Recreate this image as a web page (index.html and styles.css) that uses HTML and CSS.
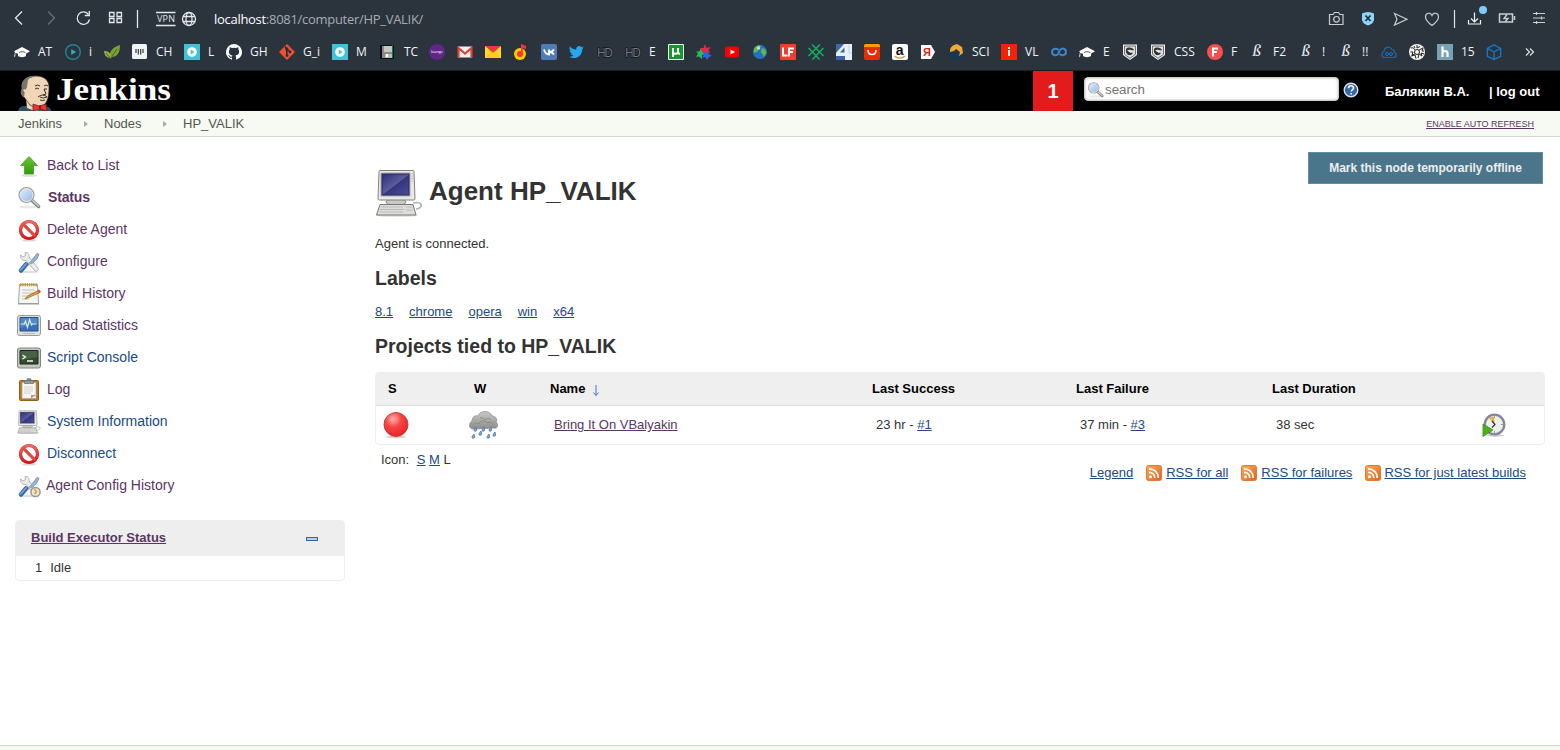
FILE: index.html
```html
<!DOCTYPE html>
<html lang="en">
<head>
<meta charset="utf-8">
<title>HP_VALIK [Jenkins]</title>
<link rel="stylesheet" href="styles.css">
</head>
<body>
<svg class="defs" aria-hidden="true">
  <defs>
    <linearGradient id="gGreen" x1="0" y1="0" x2="0" y2="1"><stop offset="0" stop-color="#6cc63a"/><stop offset="1" stop-color="#2f9a0c"/></linearGradient>
    <linearGradient id="gScreen" x1="0" y1="0" x2="1" y2="1"><stop offset="0" stop-color="#2f2f78"/><stop offset=".5" stop-color="#5b5d9c"/><stop offset=".52" stop-color="#34357c"/><stop offset="1" stop-color="#4b4c94"/></linearGradient>
    <linearGradient id="gRss" x1="0" y1="0" x2="1" y2="1"><stop offset="0" stop-color="#f8b05c"/><stop offset="1" stop-color="#e2601a"/></linearGradient>
    <linearGradient id="gCloud" x1="0" y1="0" x2="0" y2="1"><stop offset="0" stop-color="#c9cac6"/><stop offset="1" stop-color="#8b8d89"/></linearGradient>
    <radialGradient id="gBall" cx=".38" cy=".28" r=".75"><stop offset="0" stop-color="#ffb3b0"/><stop offset=".45" stop-color="#f84444"/><stop offset="1" stop-color="#e82424"/></radialGradient>
    <linearGradient id="gLens" x1="0" y1="0" x2="1" y2="1"><stop offset="0" stop-color="#e4f0fc"/><stop offset="1" stop-color="#8db7e6"/></linearGradient>
    <linearGradient id="gNo" x1="0" y1="0" x2="0" y2="1"><stop offset="0" stop-color="#ef6a66"/><stop offset="1" stop-color="#d81616"/></linearGradient>
  </defs>
  <symbol id="hat" viewBox="0 0 16 16"><path d="M8 3 0 7.300l1 .7-1 5.500 1.300-1.500V9L4 9.800v2.200c2 1.500 6 1.500 8 0V9.800l4-2.500z" fill="#fff"/><path d="M5 8.700c1-1.300 5-1.300 6.500 0" fill="none" stroke="#2b343d" stroke-width=".8"/></symbol>
  <symbol id="playbox" viewBox="0 0 16 16"><path fill="#42c2d8" d="M0 0h16v16H0z"/><circle cx="8" cy="8" r="4.800" fill="#fff"/><path d="m6.700 5.500 3.800 2.500-3.800 2.500z" fill="#42c2d8"/></symbol>
  <symbol id="shield" viewBox="0 0 16 16"><path d="M1 .5h14v10.500L8 16l-7-5z" fill="#eee"/><path d="M2.500 2h11v8.300L8 14.300l-5.500-4z" fill="#ddd" stroke="#555" stroke-width=".8"/><path d="M4 5c2-2.500 7-1.500 8 1l-2 1-2-1.500-3 1 3 1.500 3 1-2 2H6L4 8.500z" fill="#333"/><path d="M6 7l5-1-2 3z" fill="#eee"/></symbol>
  <symbol id="lens" viewBox="0 0 24 24"><ellipse cx="11" cy="21" rx="9" ry="1.500" fill="#e9e9e9"/><path d="m15 14.500 6.500 6" stroke="#858585" stroke-width="3.600" stroke-linecap="round"/><path d="m15.500 14.500 6 5.500" stroke="#d0d0d0" stroke-width="1.500" stroke-linecap="round"/><circle cx="9.500" cy="9" r="7.200" fill="url(#gLens)" stroke="#9c9e9a" stroke-width="1.800"/><circle cx="9.500" cy="9" r="6.500" fill="none" stroke="#f1f1f1"/></symbol>
  <symbol id="no" viewBox="0 0 24 24"><ellipse cx="12" cy="22.300" rx="7" ry="1.200" fill="#d8d8d8"/><circle cx="12" cy="12" r="8.500" fill="#fff" stroke="#c42525" stroke-width="3.200"/><path d="m6 6 12 12" stroke="#c42525" stroke-width="3"/><circle cx="12" cy="12" r="8.500" fill="none" stroke="url(#gNo)" stroke-width="2.500"/><path d="m6 6 12 12" stroke="#e84744" stroke-width="2.300"/></symbol>
  <symbol id="tools" viewBox="0 0 24 24"><ellipse cx="12" cy="22" rx="10" ry="1.200" fill="#e0e0e0"/><path d="M3.500 5 6 7l2.500-1.500L8 2.500c3-.5 4.500 2 4 4.500l9 11c1 2-1 4-3 3L9 10.500c-3 1-6-2-5.500-5.500z" fill="#eceeeb" stroke="#a2a4a0" stroke-width=".8"/><path d="m20.500 3 1.500 1.500-2.500 5-5 4.500-1.500-1.500 3-4z" fill="#8fb3da" stroke="#7891ad" stroke-width=".8"/><path d="m13.500 12.500-3 3" stroke="#aaa" stroke-width="2"/><path d="m4 20.500 5-6" stroke="#3b6cab" stroke-width="4.600" stroke-linecap="round"/><path d="m3.500 20 5.500-6" stroke="#78a4d8" stroke-width="1.800" stroke-linecap="round"/></symbol>
  <symbol id="computer" viewBox="0 0 48 48"><ellipse cx="22" cy="46.500" rx="21" ry="1.300" fill="#dedede"/><path d="M38 34c10-2 11 5 3 6" fill="none" stroke="#b4b5b2" stroke-width="1.600"/><ellipse cx="21" cy="33" rx="10" ry="3.500" fill="#c9cac7" stroke="#888"/><path d="M5 1.500h33q1 0 1 1l1 27q0 1.500-1.500 1.500H4.500Q3 31 3 29.500L4 2.500q0-1 1-1z" fill="#e9eae7" stroke="#80817e"/><path d="M6 4h29v23H6z" fill="#292c66" stroke="#aaa"/><path d="M7.500 5.500h26v20h-26z" fill="url(#gScreen)"/><path d="M37 4v10" stroke="#999" stroke-dasharray="1 1.500"/><path d="M5 35.500h33l3 10.500H1.500z" fill="#dcddda" stroke="#777873"/><path d="M6 38h22M5 40.500h24M5 43h23M31 38h6M31 41h6" stroke="#bbbdb9"/></symbol>
  <symbol id="rss" viewBox="0 0 16 16"><rect x=".5" y=".5" width="15" height="15" rx="2" fill="url(#gRss)" stroke="#e07a34"/><circle cx="4.500" cy="11.800" r="1.500" fill="#fff"/><path d="M3 7.300c3.500 0 5.800 2.300 5.800 5.800M3 3.800c5.500 0 9.300 3.800 9.300 9.300" fill="none" stroke="#fff" stroke-width="1.700"/></symbol>
</svg>

<div class="browser">
  <div class="toolbar">
    <svg class="nav-icons" viewBox="0 0 210 36" fill="none" stroke="#e3e8eb" stroke-width="1.300">
      <path d="m22 11.500-6.500 6.500 6.500 6.500"/><path d="m48 11.500 6.500 6.500-6.500 6.500" stroke="#65717b"/>
      <path d="M88.500 14.500a6.200 6.200 0 1 0 1 5"/><path d="M89.300 11v4.500h-4.500"/>
      <path d="M109.500 12.500h4.500v4h-4.500zM117 12.500h4.500v4H117zM109.500 18.500h4.500v4h-4.500zM117 18.500h4.500v4H117z"/>
      <path d="M137.500 10v18"/><path d="M156 12.500h19.500M156 25.500h19.500"/>
      <text class="vpn" x="157" y="22.300" textLength="18">VPN</text>
      <circle cx="189" cy="19" r="6.500"/><ellipse cx="189" cy="19" rx="3" ry="6.500"/><path d="M183 16.500h12M183 21.500h12"/>
    </svg>
    <div class="url"><b>localhost</b>:8081/computer/HP_VALIK/</div>
    <svg class="tool-icons" viewBox="0 0 240 36" fill="none" stroke="#c8ced2" stroke-width="1.200">
      <path d="M9.500 14.500H13l1.500-2h4l1.500 2h3v10H9.500z"/><circle cx="16.500" cy="19.300" r="2.800"/>
      <path d="M42 13.500q6-3 12 0v6.500q-1 4-6 5.500-5-1.500-6-5.500z" fill="#8ed5fb" stroke="none"/><path d="m45.500 15.500 5 5.500m0-5.500-5 5.500" stroke="#203040" stroke-width="1.800"/>
      <path d="m74.500 13.500 12.500 5.700L74.500 25l2.500-5.800z"/>
      <path d="M112 25.500c-4-3-6.500-5.500-6.500-8.500 0-4.500 5-5 6.500-1.500 1.500-3.500 6.500-3 6.500 1.500 0 3-2.500 5.500-6.500 8.500z"/>
      <path d="M134.500 10v18" stroke="#dde2e5"/><path d="M154.500 12.500v9m-3.500-3 3.500 3.500 3.500-3.500M148.500 20v4h12v-4" stroke="#eef2f4"/><circle cx="163" cy="10" r="4" fill="#80ccfb" stroke="none"/>
      <path d="M179.500 14h13v8h-13zM194.500 16v4" stroke-width="1.500"/><path d="m187 14.500-3 4h4l-3 3.500" stroke-width="1.400"/>
      <path d="M213 13.500h12M213 18h12M213 22.500h12M216.500 12v3M221.500 16.500v3M216.500 21v3"/>
    </svg>
  </div>
  <div class="bookmarks">
    <span class="bm"><svg><use href="#hat"/></svg><i class="w15">AT</i></span>
    <span class="bm"><svg viewBox="0 0 16 16"><circle cx="8" cy="8" r="7.300" fill="none" stroke="#1f8799" stroke-width="1.400"/><path d="m6.200 5 5 3-5 3z" fill="#35a9bc"/></svg><i class="w3">i</i></span>
    <span class="bm"><svg viewBox="0 0 16 16"><path d="M6.500 15C4 9 8 3 16 1c0 8-3 12-8 12z" fill="#7a9e34"/><path d="M0 7c5 0 7 2 6.500 7C2 14 .5 11 0 7z" fill="#8fb340"/><path d="m7 14 6-9M2 9l4 5" stroke="#476821"/></svg></span>
    <span class="bm"><svg viewBox="0 0 16 16"><rect y="0" width="15" height="15" rx="1.500" fill="#f2f3f4"/><path d="M4 5v4M6.300 5v5.500M8.700 5v5.500M11 5v4" stroke="#252d35" stroke-width="1.100"/></svg><i class="w16">CH</i></span>
    <span class="bm"><svg><use href="#playbox"/></svg><i class="w6">L</i></span>
    <span class="bm"><svg viewBox="0 0 16 16"><path fill="#fff" d="M8 0a8 8 0 0 0-2.530 15.590c.4.070.55-.17.550-.38v-1.490C3.800 14.210 3.330 12.650 3.330 12.650c-.36-.93-.89-1.170-.89-1.170-.72-.5.060-.48.060-.48.800.060 1.220.820 1.220.82.720 1.220 1.870.87 2.330.66.070-.52.280-.87.510-1.070-1.780-.2-3.640-.89-3.640-3.950 0-.87.310-1.590.820-2.150-.08-.2-.36-1.020.080-2.120 0 0 .67-.21 2.200.82a7.700 7.700 0 0 1 4 0c1.530-1.030 2.200-.82 2.200-.82.440 1.100.160 1.920.080 2.120.510.560.820 1.280.820 2.150 0 3.070-1.870 3.750-3.650 3.950.290.250.540.730.540 1.480v2.320c0 .21.150.46.550.38A8 8 0 0 0 8 0"/></svg><i class="w17">GH</i></span>
    <span class="bm"><svg viewBox="0 0 16 16"><path d="m8 0 8 8-8 8-8-8z" fill="#f1502f"/><path d="M6 2.500 8 5v6M8 5l3 3" stroke="#28303a" stroke-width="1.300"/><circle cx="8" cy="5" r="1.400" fill="#28303a"/><circle cx="11" cy="8" r="1.400" fill="#28303a"/><circle cx="8" cy="11.500" r="1.400" fill="#28303a"/></svg><i class="w17">G_i</i></span>
    <span class="bm"><svg><use href="#playbox"/></svg><i class="w12">M</i></span>
    <span class="bm"><svg viewBox="0 0 16 16"><path d="M0 1h14v14H0z" fill="#0c0f10"/><path d="M2 2h2v12H2z" fill="#888"/><path d="M4 2h8v6H4z" fill="#c6c6c6"/><path d="M2 8h11v6H2z" fill="#888"/><path d="M5 10h7v4H5z" fill="#bbb"/><path d="M6 10h2v3H6z" fill="#fff"/><path d="M12.500 1v13" stroke="#06813d"/></svg><i class="w13">TC</i></span>
    <span class="bm"><svg viewBox="0 0 16 16"><circle cx="8" cy="8" r="8" fill="#622589"/><text class="tiny" x="2" y="9" textLength="12">lounge</text></svg></span>
    <span class="bm"><svg viewBox="0 0 16 16"><path d="M1 2.500h14v11H1z" fill="#eee"/><path d="M1.500 13.500V4L8 9.500 14.500 4v9.500" fill="none" stroke="#d94434" stroke-width="2.200"/></svg></span>
    <span class="bm"><svg viewBox="0 0 16 16"><path d="M0 2h16v12H0z" fill="#ffd72d"/><path d="M0 2h16L8 9z" fill="#e93b3b"/><path d="m0 14 6-6.500L8 9l2-1.500 6 6.500z" fill="#ffca21"/></svg></span>
    <span class="bm"><svg viewBox="0 0 16 16"><circle cx="7" cy="10" r="6" fill="#ffcc00"/><path d="M8 10V0l5 2v3L9.800 4v6" fill="#f33"/><circle cx="7" cy="10" r="3" fill="#f33"/></svg></span>
    <span class="bm"><svg viewBox="0 0 16 16"><rect width="16" height="16" rx="2" fill="#4d7db4"/><path d="M3 5.500c1 3.500 2.500 5 5 5v-5m5 0c-1 1.700-2.500 2.500-5 2.500 2.500 0 4 1 5 2.500" fill="none" stroke="#fff" stroke-width="1.900"/></svg></span>
    <span class="bm"><svg viewBox="0 0 26 24"><path fill="#28a5ef" d="M23.950 4.570a10 10 0 0 1-2.820.780 4.960 4.960 0 0 0 2.160-2.720 10 10 0 0 1-3.130 1.180 4.920 4.920 0 0 0-8.380 4.480C7.690 8.100 4.070 6.130 1.640 3.160a4.900 4.900 0 0 0 1.520 6.570 4.900 4.900 0 0 1-2.230-.61v.06a4.920 4.920 0 0 0 3.950 4.830 5 5 0 0 1-2.210.08 4.930 4.930 0 0 0 4.600 3.420A9.870 9.870 0 0 1 0 19.540a14 14 0 0 0 7.550 2.210c9.050 0 14-7.500 14-13.980q0-.32-.02-.63a9.900 9.900 0 0 0 2.420-2.570"/></svg></span>
    <span class="bm"><svg viewBox="0 0 16 16"><text class="hd" x="0" y="12.500" textLength="16">HD</text></svg></span>
    <span class="bm"><svg viewBox="0 0 16 16"><text class="hd" x="0" y="12.500" textLength="16">HD</text></svg><i class="w7">E</i></span>
    <span class="bm"><svg viewBox="0 0 16 16"><path d="M.5.500h15v15H.5z" fill="#17962d" stroke="#edf7ee"/><path d="M5 13V4m0 4c0 2 5 3 5-.5V4m0 3c0 3 1 3 2 2.500" fill="none" stroke="#fff" stroke-width="2"/></svg></span>
    <span class="bm"><svg viewBox="0 0 16 16"><path d="m9 0 1.500 4 4-1-2 3.500 2 2-4.500.5-3 1.500L5 7.500 4 4l3.500 0z" fill="#e12b44"/><path d="m5 5 1 3 3 2-3 1v4l-3-2.500-3 .5 2-3.500L0 7.500h3z" fill="#24bd55"/><path d="m12 7 .5 3 3.500 2-3.500 1-1 3-2.500-3-3 .5 2-3-1-3 3 1z" fill="#3461ea"/></svg></span>
    <span class="bm"><svg viewBox="0 0 16 16"><rect x="1" y="2.500" width="14" height="11" rx="2.500" fill="#f60000"/><path d="m6.500 5.500 4.500 2.500-4.500 2.500z" fill="#fff"/></svg></span>
    <span class="bm"><svg viewBox="0 0 16 16"><circle cx="8" cy="8" r="7" fill="#2070c5"/><path d="M3 3c3-2 5-2 6-1L7 5 5 8 2 9q-1-3 1-6zM10 4l3 1 1.500 4-3 4-1-3-2-2z" fill="#65b54b"/><circle cx="6.500" cy="4" r="1.800" fill="#bbd8ee"/></svg></span>
    <span class="bm"><svg viewBox="0 0 16 16"><rect width="16" height="16" rx="1" fill="#f63b31"/><path d="M3 3.500v8h4.500M9 12.500V4.500h5M9 8h4" fill="none" stroke="#fff" stroke-width="2"/></svg></span>
    <span class="bm"><svg viewBox="0 0 16 16"><path d="m4 .5 8.500 8.500 3 3M12 .5 3.500 9l-3 3M.5 4l3 3 8 8.500M15.500 4l-3 3-8 8.500" fill="none" stroke="#16ad60" stroke-width="1.600"/></svg></span>
    <span class="bm"><svg viewBox="0 0 16 16"><path d="M0 0h16v16H0z" fill="#3f68aa"/><path d="m0 9 8-9h8v16H9v-4H0z" fill="#e6effa"/><path d="M4 8.500h4.500V3.500zM0 12h9v4H0z" fill="#3863a4"/><path d="M13 1v8h3" fill="none" stroke="#bdd1ec"/></svg></span>
    <span class="bm"><svg viewBox="0 0 16 16"><rect width="16" height="16" rx="2" fill="#e62e04"/><path d="M0 3V2q0-2 2-2h12q2 0 2 2v1z" fill="#ff9b00"/><path d="M4 6c0 6 8 6 8 0" fill="none" stroke="#fff" stroke-width="1.500"/></svg></span>
    <span class="bm"><svg viewBox="0 0 16 16"><rect width="16" height="16" rx="2" fill="#fff"/><text class="amazon" x="3.700" y="11">a</text><path d="M2.500 12c4 3 8 2 10.500 0" fill="none" stroke="#e9931b" stroke-width="1.200"/></svg></span>
    <span class="bm"><svg viewBox="0 0 16 16"><path d="M1 1h10l4 7-4 7H1z" fill="#fff"/><text class="ya" x="3" y="12">Я</text></svg></span>
    <span class="bm"><svg viewBox="0 0 16 16"><path d="M2 7c0-4 3-6 7-7l5 3 1 6-4 3 1-4-4-3-2 2-4 1z" fill="#edaa38"/><path d="M0 9c3 0 5-1 7-1 2 2-1 3 2 4 2 1 4 0 6 2-6 4-12 1-15-5z" fill="#103a59"/></svg><i class="w17">SCI</i></span>
    <span class="bm"><svg viewBox="0 0 16 16"><path fill="#f52209" d="M0 0h16v16H0z"/><path d="M7 6h2v6H7zM7 3h2v2H7z" fill="#fff"/></svg><i class="w14">VL</i></span>
    <span class="bm"><svg viewBox="0 0 16 16"><path d="M7.500 6C5.500 4 1 4.500 1 8s4.500 4 6 2l2-4c2-2.500 6-1.500 6 2s-4.500 4-6.500 2" fill="none" stroke="#3d86cc" stroke-width="2"/></svg></span>
    <span class="bm"><svg><use href="#hat"/></svg><i class="w7">E</i></span>
    <span class="bm"><svg><use href="#shield"/></svg></span>
    <span class="bm"><svg><use href="#shield"/></svg><i class="w21">CSS</i></span>
    <span class="bm"><svg viewBox="0 0 16 16"><circle cx="8" cy="8" r="8" fill="#fa4f4f"/><path d="M6 12.500v-8h5M6 8h4" fill="none" stroke="#fff" stroke-width="2"/></svg><i class="w6">F</i></span>
    <span class="bm"><svg viewBox="0 0 16 16"><text class="eszett" x="3.500" y="12">ß</text></svg><i class="w13">F2</i></span>
    <span class="bm"><svg viewBox="0 0 16 16"><text class="eszett" x="3.500" y="12">ß</text></svg><i class="w4">!</i></span>
    <span class="bm"><svg viewBox="0 0 16 16"><text class="eszett" x="3.500" y="12">ß</text></svg><i class="w7">!!</i></span>
    <span class="bm"><svg viewBox="0 0 16 16"><path d="M4 13.500C.5 13.500-.5 9 3 7.500 3 3.500 8 1 11 5.500c2 0 2.500 1.500 2 2.500 3 1 3 5.500-.5 5.500z" fill="none" stroke="#1969ad" stroke-width="1.200"/><circle cx="6" cy="10" r="1.500" fill="none" stroke="#1d73bb"/><circle cx="10" cy="10" r="1.500" fill="none" stroke="#1d73bb"/></svg></span>
    <span class="bm"><svg viewBox="0 0 16 16"><circle cx="8" cy="8" r="8" fill="#f4f4f4"/><circle cx="8" cy="8" r="2.500" fill="none" stroke="#222"/><path d="M8 1v3l3-1.500M2 4c3-1 3 1 4 2M10 6l4-2-1 3h2M1.500 8H4l-1 3 3-1M2 12l4-1 1 3.500M9 14l1-4 3 2-1-3 3 1M5 2l1 2" fill="none" stroke="#222"/></svg></span>
    <span class="bm"><svg viewBox="0 0 16 16"><path d="M0 0h16v16H0z" fill="#77a1b5"/><path d="M5.500 2.500V13m0-4c0-2.500 5-2.500 5 0v4" fill="none" stroke="#fff" stroke-width="2.200"/></svg><i class="w13">15</i></span>
    <span class="bm"><svg viewBox="0 0 16 16"><path d="m8 .8 6.700 3.500v8L8 15.500l-6.700-3.200v-8zM1.300 4.300 8 7.800l6.700-3.500M8 7.800v7.700" fill="none" stroke="#1b75bd" stroke-width="1.400"/></svg></span>
    <svg class="more" viewBox="0 0 10 16" fill="none" stroke="#dce1e4" stroke-width="1.200"><path d="m1 4.500 3.500 3.500L1 11.500M5 4.500 8.500 8 5 11.500"/></svg>
  </div>
</div>

<header class="header">
  <svg class="brand" viewBox="0 0 180 40">
    <path d="M18 40q1-5 7-5l20 0q6 1 6 5z" fill="#335061"/><path d="M26 28h16v10l-7 2-8-3z" fill="#f0d6b7"/>
    <path d="M22 18C20 9 27 5 36 5c9 0 13 5 13 11 0 4 0 12-4 17-4 5-10 4-15 1l-6-8c-3-1-4-5-2-8z" fill="#f0d6b7" stroke="#332f2b" stroke-width=".7"/>
    <path d="M22 17C21 9 27 4 38 5c-5 1-9 2-10 4l-1 7-2 4-1 6c-3-2-4-6-2-9z" fill="#777570"/><path d="M23 19c2-2 4 1 2 3" fill="#f0d6b7"/>
    <path d="M35 15q3-2 5 0M44 15q2-2 4 0M35 18q2-2 4 0M44 18h3M44 18l2 5-3 1M38 26q5-4 9 0-4 2-7 0M40 29q3 1 5 0" fill="none" stroke="#3a302b"/>
    <path d="m33 33 6 2 7-2 1 7-7-2-7 2z" fill="#e33a34" stroke="#711" stroke-width=".7"/><path d="M40 34.500v4" stroke="#711" stroke-width="1.600"/>
    <text class="wordmark" x="56" y="28.500" textLength="115" lengthAdjust="spacingAndGlyphs">Jenkins</text>
  </svg>
  <div class="alert">1</div>
  <div class="search"><svg viewBox="0 0 24 24"><use href="#lens"/></svg><span>search</span></div>
  <svg class="help" viewBox="0 0 16 16"><circle cx="8" cy="8" r="6.800" fill="#3566a8" stroke="#d6e2f1" stroke-width="1.400"/><path d="M5.500 6.300C5.500 3 10.500 3 10.500 6c0 1.800-2.300 1.800-2.300 3.600M8.200 11v1.600" fill="none" stroke="#fff" stroke-width="1.600"/></svg>
  <a class="user">Балякин В.А.</a><a class="logout">| log out</a>
</header>
<nav class="crumbs"><a class="c1">Jenkins</a><i class="arrow"></i><a class="c2">Nodes</a><i class="arrow"></i><a class="c3">HP_VALIK</a><a class="refresh">ENABLE AUTO REFRESH</a></nav>

<div class="page">
  <aside class="side">
    <a class="task"><svg viewBox="0 0 24 24"><ellipse cx="12" cy="21.500" rx="8" ry="1.300" fill="#ddd"/><path d="m12 2.500 8.500 9H16.500v8.500h-9v-8.500H3.500z" fill="url(#gGreen)" stroke="#4a9c2a" stroke-width=".8"/></svg>Back to List</a>
    <a class="task current"><svg><use href="#lens"/></svg>Status</a>
    <a class="task"><svg><use href="#no"/></svg>Delete Agent</a>
    <a class="task"><svg><use href="#tools"/></svg>Configure</a>
    <a class="task"><svg viewBox="0 0 24 24"><path d="M2.500 2.500h18l1 19H1.500z" fill="#f5f5f2" stroke="#a2a39f"/><path d="M1 22h21" stroke="#999"/><path d="M3 2.800h17" stroke="#b79b45" stroke-width="3" stroke-dasharray="1.500 .7"/><path d="M5 8h13M5 11h12M5 14h8M5 17h7" stroke="#c4c5c2"/><path d="m8 17 2.500-3L21.500 8.500l1.500 2-11.500 5z" fill="#eaa338" stroke="#965717" stroke-width=".7"/><path d="m20 9 2-1.500 2 2-2 1.500z" fill="#d65240"/></svg>Build History</a>
    <a class="task"><svg viewBox="0 0 24 24"><rect x=".5" y="1.500" width="23" height="20" rx="2" fill="#dfe1dd" stroke="#999b97"/><path d="M3 3.500h18v13.500H3z" fill="#386fba" stroke="#244d86"/><path d="M3.500 4h17v6q-9 0-17 4z" fill="#6b97d2" opacity=".6"/><path d="M3.500 10h4l1-3 2 6.500 2-8 2 5.500 1-1h4" fill="none" stroke="#d7f4df" stroke-width="1.100"/><path d="M6 19.500h12" stroke="#bbb"/></svg>Load Statistics</a>
    <a class="task"><svg viewBox="0 0 24 24"><rect x=".5" y="2" width="23" height="20" rx="2" fill="#c4c7c0" stroke="#81847f"/><path d="M3 4.500h18v13.500H3z" fill="#304c2c" stroke="#1e291b"/><path d="M3.500 5h17v6L3.500 14z" fill="#60785c" opacity=".5"/><path d="m5.500 9 3 2-3 2M10 15h6" fill="none" stroke="#f1f7ed" stroke-width="1.300"/></svg><span class="unvisited">Script Console</span></a>
    <a class="task"><svg viewBox="0 0 24 24"><rect x="2.500" y="2.500" width="19" height="20" rx="1" fill="#b87725" stroke="#96611f"/><path d="M5 4.500h14v16H5z" fill="#f5f5f3" stroke="#aaa" stroke-width=".7"/><path d="M7.500 2.500h9v3h-9zM10 .8h4v2h-4z" fill="#929b9b" stroke="#667070" stroke-width=".7"/><path d="M7 9h9M7 11h9M7 13h9M7 15h7" stroke="#d4d4d4"/><path d="M14 20.500v-3.500h5z" fill="#9c9d98"/></svg>Log</a>
    <a class="task"><svg><use href="#computer"/></svg><span class="unvisited">System Information</span></a>
    <a class="task"><svg><use href="#no"/></svg><span class="unvisited">Disconnect</span></a>
    <a class="task history"><svg viewBox="0 0 24 24"><use href="#tools"/><circle cx="18.500" cy="18" r="4.600" fill="#eee7d7" stroke="#9a91a4" stroke-width="1.500"/><path d="m17.500 15 2 3-2 2" fill="none" stroke="#d2a52a" stroke-width="1.500"/></svg>Agent Config History</a>
    <section class="executors">
      <div class="pane-title"><a>Build Executor Status</a><i class="collapse"></i></div>
      <div class="executor"><span>1</span><span>Idle</span></div>
    </section>
  </aside>
  <main class="main">
    <div class="heading"><svg><use href="#computer"/></svg><h1>Agent HP_VALIK</h1><button>Mark this node temporarily offline</button></div>
    <p class="status">Agent is connected.</p>
    <h2>Labels</h2>
    <div class="labels"><a>8.1</a><a>chrome</a><a>opera</a><a>win</a><a>x64</a></div>
    <h2>Projects tied to HP_VALIK</h2>
    <div class="projects">
      <div class="row head"><b>S</b><b>W</b><b>Name <svg class="sort" viewBox="0 0 8 13"><path d="M4 1v10.500M1.500 8.500 4 11.500l2.500-3" fill="none" stroke="#4c72c9"/></svg></b><b>Last Success</b><b>Last Failure</b><b>Last Duration</b><b></b></div>
      <div class="row body">
        <span class="ball"><svg viewBox="0 0 28 28"><ellipse cx="14" cy="26" rx="10" ry="1.500" fill="#d4d4d4"/><circle cx="14" cy="13.500" r="12" fill="url(#gBall)" stroke="#b94745"/></svg></span>
        <span class="weather"><svg viewBox="0 0 32 30"><path d="M6 19c-5 1-6-6-2-8 0-4 3-6 6-5 2-6 12-6 14 0 4 0 6 4 4 6 3 3 2 7-3 6z" fill="url(#gCloud)" stroke="#868884" stroke-width=".7"/><path d="M5 15c2-3 5-2 6-1 1-4 7-4 8-1 3-2 6 0 6 2M12 8c3-1 4 1 5 2 2-2 5-2 6 0" fill="none" stroke="#858783" stroke-width=".8"/><g fill="#7ba6df" stroke="#3f6dad" stroke-width=".7"><path id="drop" d="M8 17c-2.500 2.500-2.500 4.300-.8 4.300S9 19.500 8 17z"/><use href="#drop" x="8"/><use href="#drop" x="15"/><use href="#drop" x="-2" y="7"/><use href="#drop" x="5" y="4"/><use href="#drop" x="13" y="7"/><use href="#drop" x="19" y="5"/></g></svg></span>
        <span><a class="visited">Bring It On VBalyakin</a></span><span>23 hr - <a>#1</a></span><span>37 min - <a>#3</a></span><span>38 sec</span>
        <span class="schedule"><svg viewBox="0 0 24 24"><ellipse cx="13" cy="22.500" rx="9" ry="1.200" fill="#ccc"/><circle cx="12.500" cy="11.500" r="9.800" fill="#eeeeeb" stroke="#85859c" stroke-width="2.300"/><path d="M12.500 11.500 7 5q3-2 5-1z" fill="#e5b63d"/><path d="m10 8 3 3.500-3 3" fill="none" stroke="#333" stroke-width="1.200"/><path d="M12.500 3v2M19 11.500h2M12.500 18v2" stroke="#999"/><path d="m1 11 10 6-10 6.500z" fill="#4eae1e" stroke="#398b18" stroke-width=".8"/></svg></span>
      </div>
    </div>
    <div class="sizes"><span>Icon:</span> <a>S</a> <a>M</a> L</div>
    <div class="feeds"><a class="legend">Legend</a><svg><use href="#rss"/></svg><a class="f1">RSS for all</a><svg><use href="#rss"/></svg><a class="f2">RSS for failures</a><svg><use href="#rss"/></svg><a class="f3">RSS for just latest builds</a></div>
  </main>
</div>
<footer></footer>
</body>
</html>
```
FILE: styles.css
```css
* { box-sizing: border-box; }
body { margin: 0; height: 750px; display: flex; flex-direction: column; overflow: hidden; background: #fff; color: #333; font: 13px/18px "Liberation Sans", Arial, sans-serif; }
svg { display: block; flex: none; }
a { color: #204a87; text-decoration: underline; white-space: nowrap; }
.defs { width: 0; height: 0; position: absolute; }

.browser { height: 71px; flex: none; background: #2b343d; border-bottom: 1px solid #171c21; font-family: "Open Sans", "Noto Sans", sans-serif; }
.toolbar { height: 36px; display: flex; }
.nav-icons { width: 210px; height: 36px; }
.vpn { font-size: 9px; fill: #e3e8eb; stroke: none; }
.url { flex: 1; padding: 10px 0 0 4px; font-size: 13px; letter-spacing: -.29px; color: #a5adb3; white-space: nowrap; }
.url b { font-weight: 400; color: #fff; }
.tool-icons { width: 240px; height: 36px; }
.bookmarks { height: 32px; padding-left: 14px; display: flex; align-items: center; gap: 12px; }
.bm { display: flex; align-items: center; gap: 8px; flex: none; }
.bm svg { width: 16px; height: 16px; overflow: visible; }
.bm i { display: block; font-style: normal; font-size: 12px; line-height: 16px; color: #f1f3f5; white-space: nowrap; }
.w3 { width: 3px; } .w4 { width: 4px; } .w6 { width: 6px; } .w7 { width: 7px; } .w12 { width: 12px; } .w13 { width: 13px; } .w14 { width: 14px; } .w15 { width: 15px; } .w16 { width: 16px; } .w17 { width: 17px; } .w21 { width: 21px; }
.tiny { font-size: 4px; fill: #fff; }
.amazon { font: bold 14px "Liberation Sans", sans-serif; fill: #111; }
.ya { font: bold 11px "Liberation Sans", sans-serif; fill: #e22222; }
.hd { font: 12px "Open Sans", sans-serif; fill: #747d84; stroke: #14191e; stroke-width: 1.6px; paint-order: stroke; }
.eszett { font: italic 17px "Liberation Serif", serif; fill: #f1f3f5; }
.more { width: 10px; height: 16px; margin-left: 11px; }

.header { height: 40px; flex: none; display: flex; background: #000; }
.brand { width: 180px; height: 40px; margin-right: 853px; }
.wordmark { font: bold 31px "Liberation Serif", serif; fill: #fff; }
.alert { width: 40px; background: #e31b1b; color: #fff; font: bold 20px/40px "Liberation Sans", Arial, sans-serif; text-align: center; }
.search { width: 255px; height: 24px; margin: 6px 4px 0 11px; padding: 1px 2px 0; display: flex; align-items: center; gap: 1px; border-radius: 4px; border: 1px solid #ccc; background: #fff; color: #757575; font-size: 13.3px; box-shadow: inset 0 0 3px #bbb; }
.search svg { width: 17px; height: 18px; }
.help { width: 16px; height: 16px; margin-top: 11px; }
.header a { color: #fff; font-weight: bold; text-decoration: none; line-height: 41px; }
.user { width: 104px; margin-left: 26px; }

.crumbs { height: 26px; flex: none; display: flex; align-items: center; padding: 0 26px 0 18px; background: #f6faf2; border-bottom: 1px solid #d3d7cf; font-size: 13px; }
.crumbs a { color: #555753; text-decoration: none; }
.crumbs .c1 { width: 66px; } .crumbs .c2 { width: 59px; }
.arrow { width: 20px; height: 7px; display: flex; align-items: center; }
.arrow::before { content: ""; border: 3.5px solid transparent; border-left: 4px solid #aaa; border-right: 0; }
.crumbs .refresh { margin-left: auto; font-size: 9px; color: #5c3566; text-decoration: underline; }

.page { flex: 1; display: flex; min-height: 0; }
.side { width: 375px; padding: 12px 30px 0 15px; }
.task { height: 32px; display: flex; align-items: center; gap: 6px; padding-left: 2px; color: #5c3566; text-decoration: none; font-size: 14px; }
.task svg { width: 24px; height: 24px; margin-top: 2px; }
.task .unvisited { color: #204a87; }
.task.current { font-weight: bold; gap: 7px; letter-spacing: -.15px; }
.task.history { gap: 5px; }
.executors { margin-top: 19px; border: 1px solid #eee; border-radius: 4px; }
.pane-title { height: 35px; padding: 0 26px 2px 15px; display: flex; align-items: center; justify-content: space-between; background: #eee; font-weight: bold; }
.pane-title a { color: #5c3566; }
.collapse { width: 12px; height: 4px; margin-top: 3px; background: #b5d3ee; border: 1px solid #3465a4; }
.executor { height: 24px; display: flex; align-items: center; gap: 8px; padding-left: 19px; }

.main { width: 1170px; padding-top: 15px; }
.heading { height: 83px; display: flex; }
.heading svg { width: 48px; height: 48px; margin-top: 17px; }
h1, h2 { margin: 0; color: #333; font-weight: bold; white-space: nowrap; }
h1 { margin: 23px 0 0 6px; font-size: 26px; line-height: 32px; }
.heading button { width: 235px; height: 32px; margin: 0 2px 0 auto; padding: 0; border: 1px solid #5c8fa8; background: #4b758b; color: #eee; font: bold 12px "Liberation Sans", Arial, sans-serif; }
.status { margin: 0; line-height: 18px; }
h2 { margin-top: 13px; font-size: 19.5px; line-height: 24px; }
.labels { display: flex; gap: 16px; margin-top: 13px; height: 18px; }
.projects { margin-top: 14px; border: 1px solid #eee; border-radius: 4px; overflow: hidden; }
.row { display: grid; grid-template-columns: 86px 76px 322px 204px 196px 211px 73px; align-items: center; }
.row > * { padding-left: 12px; }
.head { height: 33px; background: #efefef; border-bottom: 1px solid #ddd; color: #000; }
.head b { display: flex; gap: 7px; }
.sort { width: 8px; height: 13px; margin-top: 4px; }
.body { height: 38px; }
.row.body > span { padding-left: 16px; }
.row .visited { color: #5c3566; }
.row.body > .ball { padding-left: 6px; } .ball svg { width: 28px; height: 28px; }
.row.body > .weather { padding-left: 6px; } .weather svg { width: 32px; height: 30px; }
.row.body > .schedule { padding-left: 11px; } .schedule svg { width: 24px; height: 24px; }
.sizes { margin: 6px 0 0 6px; height: 18px; white-space: pre; }
.sizes span { margin-right: 4px; }
.feeds { height: 18px; margin-top: -5px; padding-right: 19px; display: flex; align-items: center; justify-content: flex-end; }
.feeds svg { width: 16px; height: 16px; margin: 0 4px 0 13px; }
.feeds .f3 { margin-left: -1px; }
footer { height: 5px; flex: none; background: #f6faf2; border-top: 1px solid #d3d7cf; }
```
